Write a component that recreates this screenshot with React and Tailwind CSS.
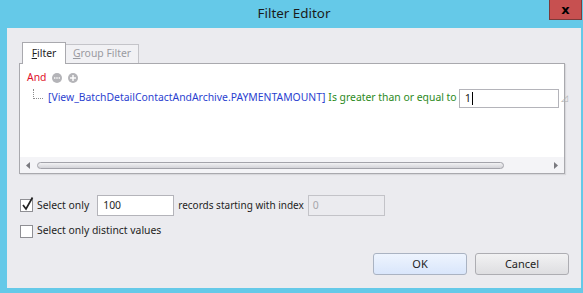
const font = { fontFamily: '"Noto Sans", "Open Sans", sans-serif' };

function CircleIcon({ kind }) {
  return (
    <svg width="10" height="10" viewBox="0 0 10 10" className="shrink-0">
      <circle cx="5" cy="5" r="5" fill="#b4b4b8" />
      {kind === 'dots' ? (
        <g fill="#fff">
          <rect x="2" y="4.3" width="1.4" height="1.4" />
          <rect x="4.3" y="4.3" width="1.4" height="1.4" />
          <rect x="6.6" y="4.3" width="1.4" height="1.4" />
        </g>
      ) : (
        <g fill="#fff">
          <rect x="4.3" y="2" width="1.4" height="6" />
          <rect x="2" y="4.3" width="6" height="1.4" />
        </g>
      )}
    </svg>
  );
}

function CheckBox({ checked }) {
  return (
    <div className="w-[13px] h-[13px] border border-[#8f8f94] bg-white shrink-0 relative">
      {checked && (
        <svg width="13" height="15" viewBox="0 0 13 15" className="absolute left-[0px] top-[-4px]">
          <path d="M2 9 L5 13 L11.5 1.5" stroke="#222" strokeWidth="1.7" fill="none" />
        </svg>
      )}
    </div>
  );
}

export default function App() {
  return (
    <div
      className="w-[583px] h-[293px] bg-[#65c9e8] flex flex-col overflow-hidden text-[10.4px] text-[#1e1e1e]"
      style={font}
    >
      {/* Title bar */}
      <div className="h-[28px] shrink-0 relative flex items-center justify-center">
        <span className="text-[13.4px] text-[#1b1b1b] mt-[-1px] ml-[5px]">Filter Editor</span>
        <div className="absolute right-[1px] top-0 w-[33px] h-[20px] bg-[#c75050] border border-[#7a3a3a] border-t-0 flex items-center justify-center">
          <span className="text-[13px] font-bold text-black leading-none" style={{ fontFamily: '"DejaVu Sans", sans-serif' }}>x</span>
        </div>
      </div>

      {/* Client area */}
      <div className="ml-[7px] mr-[2px] h-[260px] shrink-0 bg-[#ebebef] flex flex-col pl-[12px] pr-[16px] pt-[13px]">
        {/* Tabs */}
        <div className="flex items-end h-[22px] pl-[3px]">
          <div className="w-[44px] h-[22px] bg-white border border-[#a9a9ae] border-b-0 flex items-center justify-center relative z-10 mb-[-1px] pt-[1px]">
            <span><span className="underline">F</span>ilter</span>
          </div>
          <div className="w-[73px] h-[19px] bg-[#f1f1f4] border border-[#c4c4c9] border-b-0 border-l-0 flex items-center justify-center text-[#9a9aa0]">
            <span><span className="underline">G</span>roup Filter</span>
          </div>
        </div>

        {/* Panel */}
        <div className="w-[546px] h-[111px] border border-[#a9a9ae] bg-white flex flex-col shadow-[1px_1px_1px_rgba(0,0,0,0.08)]">
          <div className="flex-1 flex flex-col pl-[7px] pt-[5px]">
            <div className="flex items-center gap-[6px] h-[18px]">
              <span className="text-[#e0102a]">And</span>
              <CircleIcon kind="dots" />
              <CircleIcon kind="plus" />
            </div>
            <div className="flex items-center h-[20px] mt-[1px]">
              <div className="w-[10px] h-[10px] ml-[6px] mt-[-8px] border-l border-b border-dotted border-[#8c8c8c] shrink-0" />
              <span className="text-[#2b3fd0] ml-[5px] whitespace-nowrap">[View_BatchDetailContactAndArchive.PAYMENTAMOUNT]</span>
              <span className="text-[#2b8a1c] ml-[3px] whitespace-nowrap">Is greater than or equal to</span>
              <div className="ml-[2px] w-[100px] h-[19px] border border-[#b4b4ba] bg-white flex items-center pl-[5px] shrink-0 text-[11px]">
                <span>1</span>
                <span className="w-[1px] h-[13px] bg-black ml-[1px]" />
              </div>
              <span className="ml-[2px] text-[9px] text-[#b0b0b0]">◿</span>
            </div>
          </div>
          {/* Scrollbar */}
          <div className="h-[16px] bg-[#f4f4f7] flex items-center px-[6px] gap-[6px]">
            <svg width="5" height="7" viewBox="0 0 5 7"><path d="M4 0 L0 3.5 L4 7 Z" fill="#7a7a80" /></svg>
            <div className="w-[467px] h-[7px] rounded-full border border-[#a3a3aa] bg-gradient-to-b from-[#f2f2f4] to-[#d3d3d8]" />
            <div className="flex-1" />
            <svg width="5" height="7" viewBox="0 0 5 7"><path d="M1 0 L5 3.5 L1 7 Z" fill="#7a7a80" /></svg>
          </div>
        </div>

        {/* Options */}
        <div className="flex flex-col mt-[21px] pl-[1px] gap-[8px]">
          <div className="flex items-center h-[21px]">
            <CheckBox checked />
            <span className="ml-[4px]">Select only</span>
            <div className="ml-[8px] w-[77px] h-[21px] border border-[#b4b4ba] bg-white flex items-center pl-[5px]">100</div>
            <span className="ml-[4px] text-[10px]">records starting with index</span>
            <div className="ml-[4px] w-[77px] h-[21px] border border-[#c3c3c8] bg-[#ebebef] flex items-center pl-[4px] text-[#a6a6ab]">0</div>
          </div>
          <div className="flex items-center h-[14px]">
            <CheckBox />
            <span className="ml-[4px]">Select only distinct values</span>
          </div>
        </div>

        {/* Buttons */}
        <div className="flex justify-end gap-[8px] mt-[15px] mr-[-4px]">
          <button className="w-[94px] h-[22px] rounded-[3px] border border-[#aab3c2] bg-gradient-to-b from-[#eef4fe] to-[#d9e6fb] text-[11px] text-[#1e1e1e]">OK</button>
          <button className="w-[94px] h-[22px] rounded-[3px] border border-[#adadb2] bg-gradient-to-b from-[#f2f2f3] to-[#dedee1] text-[11px] text-[#1e1e1e]">Cancel</button>
        </div>
      </div>
    </div>
  );
}
